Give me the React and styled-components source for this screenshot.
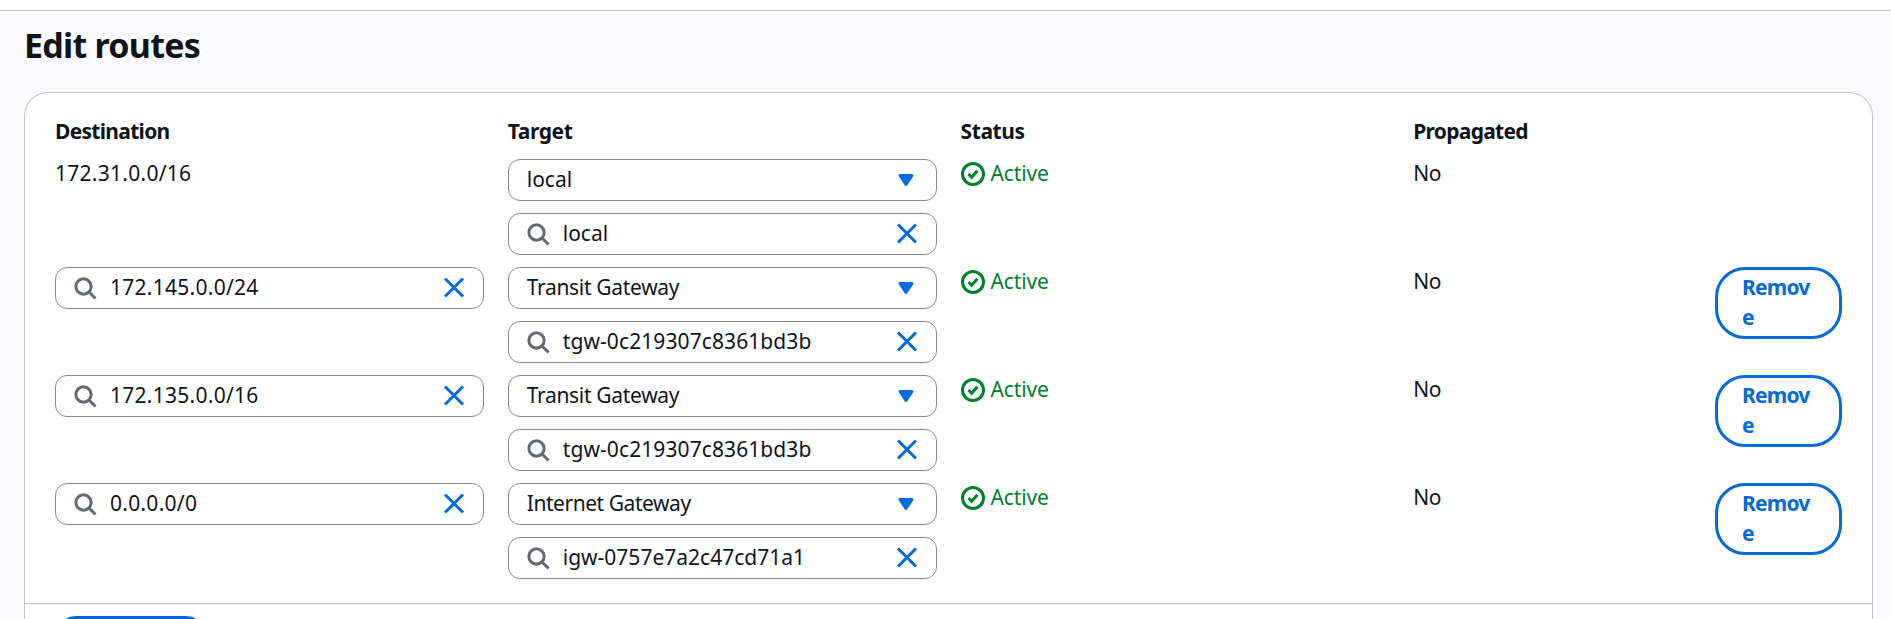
import React from "react";
import styled, { createGlobalStyle } from "styled-components";

const GlobalStyle = createGlobalStyle`
  * { box-sizing: border-box; }
  body {
    margin: 0;
    color: #0f141a;
    font: 400 21px/30px "Noto Sans", "Open Sans", sans-serif;
  }
`;

const Shell = styled.div`
  height: 100vh;
  overflow: hidden;
  display: flex;
  flex-direction: column;
  background: #fbfbfe;
`;

const TopBar = styled.div`
  flex: none;
  height: 11px;
  background: #fff;
  border-bottom: 1px solid #c3c3c8;
`;

const Page = styled.main`
  flex: 1;
  min-height: 0;
  display: flex;
  flex-direction: column;
  padding: 13px 18px 0 24px;
`;

const Title = styled.h1`
  flex: none;
  margin: 0 0 26px;
  font-size: 34px;
  line-height: 42px;
  font-weight: 700;
  letter-spacing: -0.75px;
`;

const Panel = styled.section`
  flex: 1;
  min-height: 0;
  overflow: hidden;
  background: #fff;
  border: 1px solid #c3c3c8;
  border-bottom: 0;
  border-radius: 24px 24px 0 0;
`;

const Grid = styled.div`
  display: grid;
  grid-template-columns: repeat(12, minmax(0, 1fr));
  column-gap: 24px;
  row-gap: 12px;
  padding: 24px 30px;
  align-items: start;
`;

const Cell = styled.div`
  grid-column: span ${(p) => p.$span};
  display: flex;
  flex-direction: column;
  gap: 12px;
`;

const Text = styled.span`
  display: block;
  line-height: 28px;
  padding-bottom: 2px;
  white-space: nowrap;
  letter-spacing: ${(p) => p.$track || 0}px;
`;

const Label = styled(Text)`
  font-weight: 700;
`;

const Status = styled.div`
  display: flex;
  align-items: center;
  gap: 6px;
  color: #00802f;
`;

const Field = styled.div`
  display: flex;
  align-items: center;
  gap: 13px;
  height: 42px;
  padding: 0 ${(p) => (p.$select ? 18 : 17)}px;
  border: 1px solid #88888f;
  border-radius: 12px;
  background: #fff;
`;

const FieldText = styled(Text)`
  flex: 1;
`;

const RemoveButton = styled.button`
  display: block;
  width: 100%;
  height: 72px;
  padding: 2px 24px 4px;
  border: 3px solid #046ad8;
  border-radius: 30px;
  background: #fff;
  color: #046ad8;
  font: inherit;
  font-weight: 700;
  letter-spacing: -0.8px;
  text-align: left;
  overflow-wrap: anywhere;
`;

const Footer = styled.div`
  border-top: 1px solid #c3c3c8;
  padding: 12px 30px;
`;

const AddButton = styled(RemoveButton)`
  width: 152px;
  height: 42px;
`;

const Icon = styled.svg`
  flex: none;
  display: block;
  width: 24px;
  height: 24px;
  fill: none;
  stroke: currentColor;
  stroke-width: 2;
  color: ${(p) => p.$color};
`;

const SearchIcon = () => (
  <Icon viewBox="0 0 16 16" $color="#656871">
    <circle cx="7" cy="7" r="5.1" />
    <path d="m15 15-4.5-4.5" />
  </Icon>
);

const CloseIcon = () => (
  <Icon viewBox="0 0 16 16" $color="#046ad8">
    <path d="m2 1.7 12 12M14 1.7l-12 12" />
  </Icon>
);

const CaretIcon = () => (
  <Icon viewBox="0 0 16 16" $color="#006ce0">
    <path d="M4 5h8l-4 6z" fill="currentColor" strokeLinejoin="round" />
  </Icon>
);

const CheckIcon = () => (
  <Icon viewBox="0 0 16 16" $color="#00802f">
    <circle cx="8" cy="8" r="7" />
    <path d="m5 8 2.1 2.2 3.8-4.4" />
  </Icon>
);

const SearchField = ({ value, track }) => (
  <Field>
    <SearchIcon />
    <FieldText $track={track}>{value}</FieldText>
    <CloseIcon />
  </Field>
);

const SelectField = ({ value, track }) => (
  <Field $select>
    <FieldText $track={track}>{value}</FieldText>
    <CaretIcon />
  </Field>
);

const columns = [
  { name: "Destination", track: -0.7 },
  { name: "Target", track: -0.4 },
  { name: "Status", track: -0.4 },
  { name: "Propagated", track: -0.72 },
];

const routes = [
  { destination: "172.31.0.0/16", type: "local", target: "local", fixed: true },
  { destination: "172.145.0.0/24", type: "Transit Gateway", typeTrack: -0.32, target: "tgw-0c219307c8361bd3b", targetTrack: 0.09 },
  { destination: "172.135.0.0/16", type: "Transit Gateway", typeTrack: -0.32, target: "tgw-0c219307c8361bd3b", targetTrack: 0.09 },
  { destination: "0.0.0.0/0", type: "Internet Gateway", typeTrack: -0.45, target: "igw-0757e7a2c47cd71a1" },
];

const RouteRow = ({ route }) => (
  <>
    <Cell $span={3}>
      {route.fixed ? (
        <Text $track={0.27}>{route.destination}</Text>
      ) : (
        <SearchField value={route.destination} track={0.27} />
      )}
    </Cell>
    <Cell $span={3}>
      <SelectField value={route.type} track={route.typeTrack} />
      <SearchField value={route.target} track={route.targetTrack} />
    </Cell>
    <Cell $span={3}>
      <Status>
        <CheckIcon />
        <Text $track={-0.15}>Active</Text>
      </Status>
    </Cell>
    <Cell $span={2}>
      <Text $track={-0.5}>No</Text>
    </Cell>
    <Cell $span={1}>{!route.fixed && <RemoveButton>Remove</RemoveButton>}</Cell>
  </>
);

export default function App() {
  return (
    <Shell>
      <GlobalStyle />
      <TopBar />
      <Page>
        <Title>Edit routes</Title>
        <Panel>
          <Grid>
            {columns.map((column) => (
              <Cell key={column.name} $span={3}>
                <Label $track={column.track}>{column.name}</Label>
              </Cell>
            ))}
            {routes.map((route) => (
              <RouteRow key={route.destination} route={route} />
            ))}
          </Grid>
          <Footer>
            <AddButton aria-label="Add route" />
          </Footer>
        </Panel>
      </Page>
    </Shell>
  );
}
